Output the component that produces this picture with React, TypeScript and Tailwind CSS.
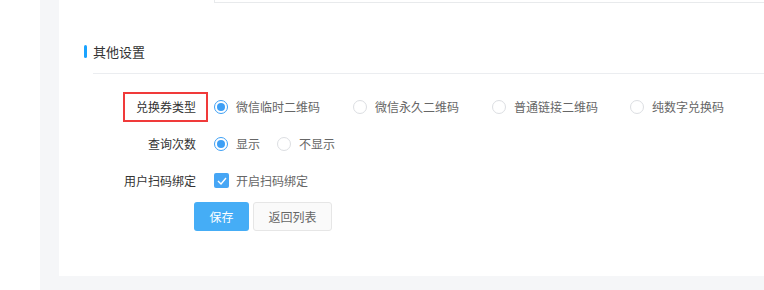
import React from 'react';

function Radio({ checked, label, className = '' }: { checked?: boolean; label: string; className?: string }) {
  return (
    <label className={`flex items-center ${className}`}>
      <span
        className={`w-[14px] h-[14px] rounded-full border flex items-center justify-center bg-white ${
          checked ? 'border-[#3d9ff5]' : 'border-[#dcdee2]'
        }`}
      >
        {checked && <span className="w-[8px] h-[8px] rounded-full bg-[#3d9ff5]" />}
      </span>
      <span className="ml-[8px] text-[#666]">{label}</span>
    </label>
  );
}

function Row({ label, children, marked }: { label: string; children: React.ReactNode; marked?: boolean }) {
  return (
    <div className="flex items-center h-[37px]">
      <div className="w-[137px] flex justify-end">
        <span className="relative text-[#333]">
          {label}
          {marked && (
            <span className="absolute -left-[13px] -right-[12px] -top-[9px] -bottom-[9px] border-2 border-[#f03a3a]" />
          )}
        </span>
      </div>
      <div className="ml-[18px] flex items-center">{children}</div>
    </div>
  );
}

export default function App() {
  return (
    <div
      className="w-[764px] h-[290px] flex bg-white overflow-hidden text-[12px] leading-none"
      style={{ fontFamily: '"Noto Sans CJK SC", "Noto Sans", sans-serif' }}
    >
      <div className="w-[40px] bg-white" />
      <div className="flex-1 bg-[#f5f6f8] pl-[19px] pb-[14px]">
        <div className="bg-white h-full flex flex-col">
          {/* input box cut off at top */}
          <div className="ml-[155px] h-[3px] border-l border-b border-[#e8eaec]" />

          {/* section title */}
          <div className="flex items-center mt-[42px] pl-[25px]">
            <span className="w-[3px] h-[13px] rounded-full bg-[#1aa3ff]" />
            <span className="ml-[6px] text-[13px] text-[#333]">其他设置</span>
          </div>
          <div className="ml-[34px] mt-[15px] border-t border-[#ebedf0]" />

          <div className="mt-[14px]">
            <Row label="兑换券类型" marked>
              <Radio checked label="微信临时二维码" className="mr-[33px]" />
              <Radio label="微信永久二维码" className="mr-[33px]" />
              <Radio label="普通链接二维码" className="mr-[32px]" />
              <Radio label="纯数字兑换码" />
            </Row>
            <Row label="查询次数">
              <Radio checked label="显示" className="mr-[17px]" />
              <Radio label="不显示" />
            </Row>
            <Row label="用户扫码绑定">
              <label className="flex items-center">
                <span className="w-[15px] h-[15px] bg-[#46a6f5] rounded-[2px] flex items-center justify-center">
                  <svg width="10" height="8" viewBox="0 0 10 8" fill="none">
                    <path d="M1 4l3 3 5-6" stroke="white" strokeWidth="1.4" />
                  </svg>
                </span>
                <span className="ml-[7px] text-[#666]">开启扫码绑定</span>
              </label>
            </Row>
          </div>

          <div className="flex gap-[4px] ml-[135px] mt-[3px]">
            <button className="w-[55px] h-[29px] rounded-[3px] bg-[#45adf6] text-white text-[12px]">保存</button>
            <button className="w-[79px] h-[29px] rounded-[3px] bg-[#fafafa] border border-[#e6e6e6] text-[#666] text-[12px]">
              返回列表
            </button>
          </div>
        </div>
      </div>
    </div>
  );
}
